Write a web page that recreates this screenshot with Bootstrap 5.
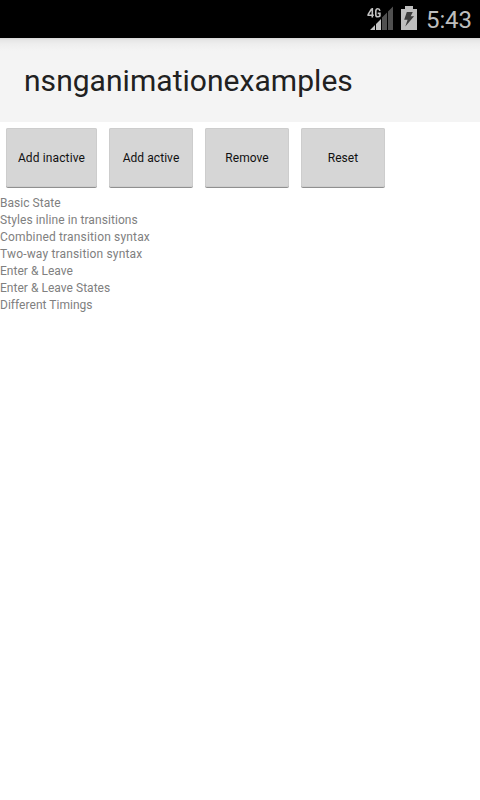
<!DOCTYPE html>
<html lang="en">
<head>
<meta charset="utf-8">
<meta name="viewport" content="width=device-width, initial-scale=1">
<title>nsnganimationexamples</title>
<link href="https://cdn.jsdelivr.net/npm/bootstrap@5.3.0/dist/css/bootstrap.min.css" rel="stylesheet">
<style>
body { font-family: Roboto, sans-serif; font-size: 12px; line-height: 17px; color: #808080; }
.status-strip { height: 38px; color: #bebebe; padding-right: 9px; }
.signal { margin-right: 8px; }
.battery { margin-right: 9px; margin-bottom: 2px; }
.clock { font-size: 24px; line-height: 36px; padding-top: 2px; width: 45px; white-space: nowrap; letter-spacing: -.1px; }
.action-bar { height: 84px; padding: 2px 24px 0; background: linear-gradient(#d5d5d5 0, #e6e6e6 2px, #eee 6px, #f4f4f4 13px); }
.action-title { font-size: 30px; line-height: 36px; color: #212121; letter-spacing: .04px; }
.actions { padding: 6px 6px 8px; gap: 12px; }
.btn.action { --bs-btn-color: #111; --bs-btn-bg: #d6d6d6; --bs-btn-border-color: transparent; --bs-btn-hover-bg: #cacaca; --bs-btn-border-radius: 2px; --bs-btn-font-size: 12px; width: 84px; height: 59px; padding: 2px 0 0; border: 0; line-height: 17px; box-shadow: 0 1px 0 #909090, inset 0 0 0 1px #cdcdcd; letter-spacing: .06px; }
.btn.action-wide { width: 91px; letter-spacing: .13px; }
.example-list { letter-spacing: .03px; }
.tracked { letter-spacing: .08px; }
.tracked-wide { letter-spacing: .16px; }
</style>
</head>
<body class="bg-white">
<header>
  <div class="status-strip bg-black d-flex justify-content-end align-items-center">
    <svg class="signal" width="26" height="26" viewBox="0 0 26 26" aria-hidden="true">
      <path d="M15 11.5l5-5V24h-5zM21 5.5l5-5V24h-5z" fill="#505050"/>
      <path d="M3 24l5-5v5zM9 18l5-5v11H9z" fill="#c4c4c4"/>
      <path d="M4.6 2.8L1.2 8.4V9.2h5.6M5.3 2v9.6M12.9 4.8Q12.6 2.8 10.8 2.8T8.8 5v3.7q0 2.1 2 2.1 1.5 0 2.1-.8V7.4h-2.2" fill="none" stroke="#c4c4c4" stroke-width="1.6"/>
    </svg>
    <svg class="battery" width="16" height="24" viewBox="0 0 16 24" aria-hidden="true">
      <path d="M4 0h8v3h4v21H0V3h4z" fill="#bebebe"/>
      <path d="M5.8 6h6L9.7 10.3h3.4L4.3 20.5l2.3-6.7H3.2z" fill="#3c3c3c"/>
    </svg>
    <span class="clock">5:43</span>
  </div>
  <div class="action-bar d-flex align-items-center">
    <h1 class="action-title fw-normal mb-0">nsnganimationexamples</h1>
  </div>
</header>
<main>
  <div class="actions d-flex">
    <button type="button" class="btn action action-wide">Add inactive</button>
    <button type="button" class="btn action">Add active</button>
    <button type="button" class="btn action">Remove</button>
    <button type="button" class="btn action">Reset</button>
  </div>
  <ul class="example-list list-unstyled mb-0">
    <li>Basic State</li>
    <li class="tracked">Styles inline in transitions</li>
    <li class="tracked-wide">Combined transition syntax</li>
    <li class="tracked-wide">Two-way transition syntax</li>
    <li>Enter &amp; Leave</li>
    <li>Enter &amp; Leave States</li>
    <li>Different Timings</li>
  </ul>
</main>
<script src="https://cdn.jsdelivr.net/npm/bootstrap@5.3.0/dist/js/bootstrap.bundle.min.js"></script>
</body>
</html>
